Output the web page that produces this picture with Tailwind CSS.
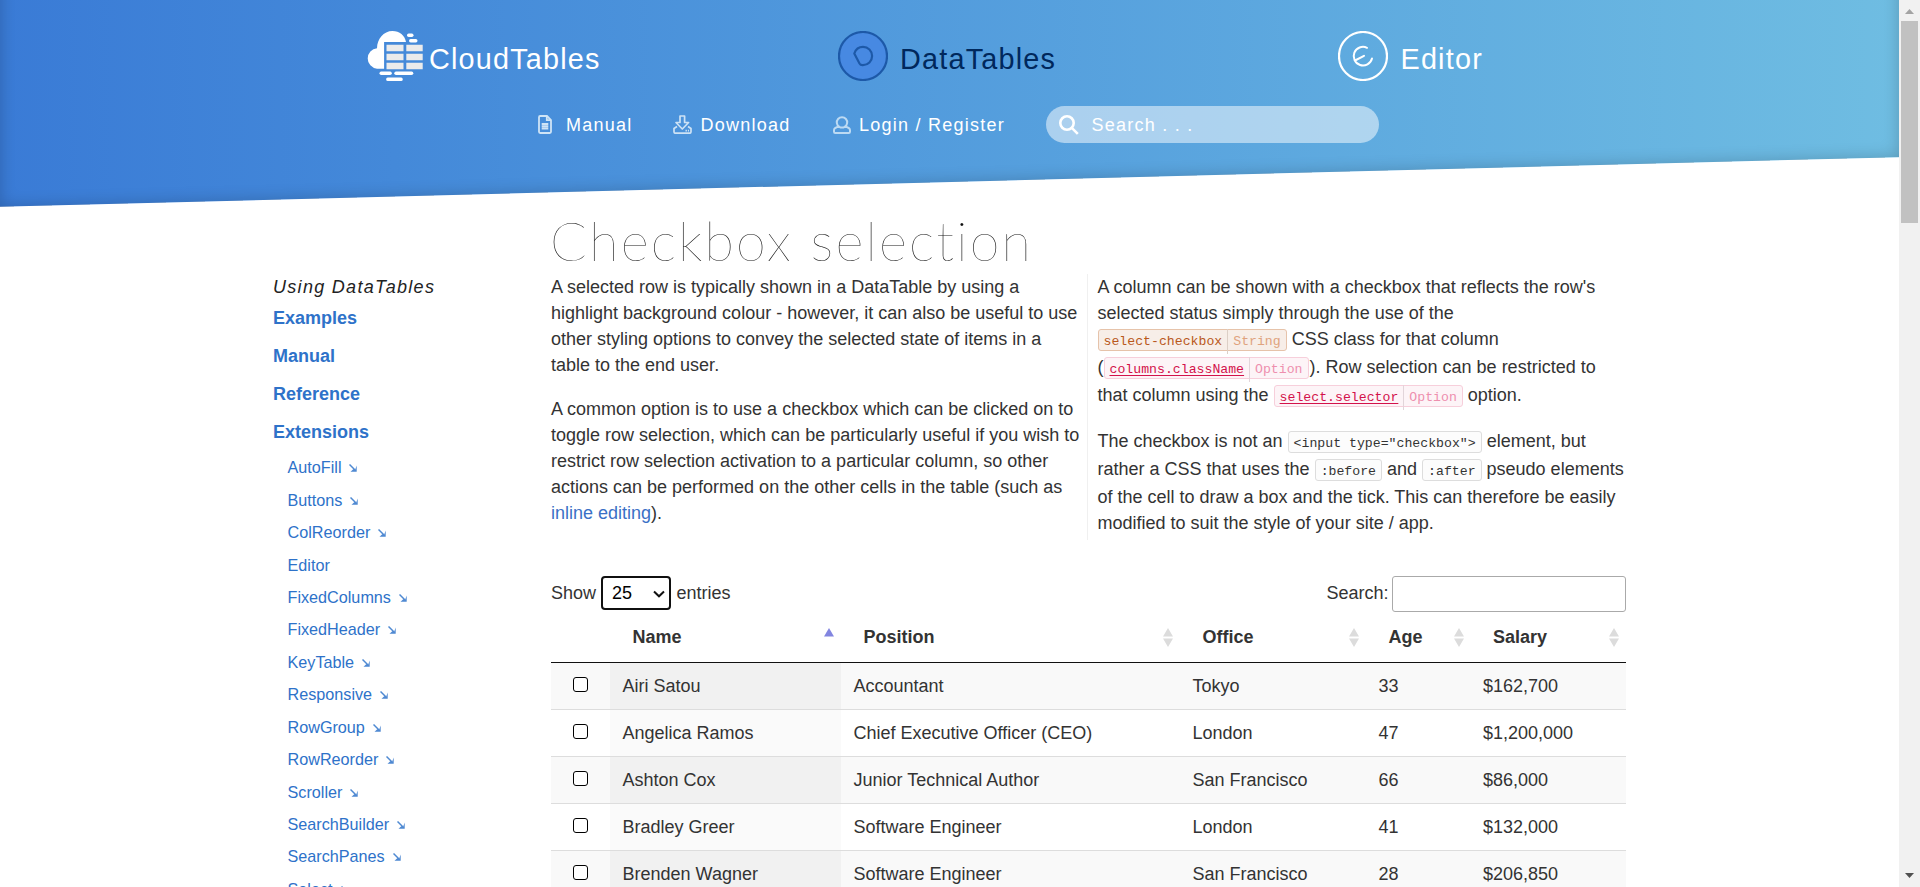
<!DOCTYPE html>
<html lang="en">
<head>
<meta charset="utf-8">
<title>DataTables example - Checkbox selection</title>
<script src="https://cdn.jsdelivr.net/npm/@tailwindcss/browser@4"></script>
</head>
<body class="bg-white">
<div class="flex h-[887px] w-[1920px] overflow-hidden font-['Liberation_Sans',Arial,sans-serif] text-[18px] leading-[26px] text-[#333]">
  <div class="relative h-full w-[1899px] overflow-hidden">
    <div class="absolute top-[-220px] left-0 h-[402px] w-full -skew-y-[1.5deg] bg-linear-to-r from-[#3a7bd6] to-[#6fbde2] shadow-[inset_0_0_16px_rgba(0,0,0,0.2)]"></div>

    <header class="relative h-[206px] pt-[31px] text-white">
      <div class="flex h-[50px] items-start text-[28.8px] leading-[32px] tracking-[1.200px] whitespace-nowrap">
        <a class="ml-[366px] flex w-[472px]">
          <svg class="h-[50px] w-[57px] shrink-0" viewBox="-0.500 0 57 50">
            <path fill="#fff" d="M17.600 11v26.700H10.500A10.300 10.300 0 0 1 10.500 17.200C10.500 8 17 0 26 0c7 0 12.500 4.500 13.500 11z"/>
            <g fill="#fff"><rect x="40.500" y="2.500" width="6.500" height="3.500" rx="1.700"/><rect x="42.500" y="8" width="8.500" height="3.500" rx="1.700"/><rect x="13" y="40.500" width="12.300" height="3.500" rx="1.700"/><rect x="27.800" y="40.500" width="19" height="3.500" rx="1.700"/><rect x="19.700" y="46.500" width="16.500" height="3.500" rx="1.500"/></g>
            <g fill="#ebebeb"><path d="M20 13.800h17v6.500H20zM39.800 13.800h16.400v6.500H39.800zM20 22.800h17v6.500H20zM39.800 22.800h16.400v6.500H39.800zM20 31.800h17v6.500H20zM39.800 31.800h16.400v6.500H39.800z"/></g>
          </svg>
          <span class="ml-[6px] pt-[12px]">CloudTables</span>
        </a>
        <a class="flex w-[500px] text-[#00285c]">
          <svg class="h-[50px] w-[50px] shrink-0" viewBox="0 0 50 50" fill="none" stroke="#1d59a8"><circle cx="25" cy="25" r="24" fill="#4789e2" stroke-width="2.200"/><path d="M16.300 22.500C18 17.500 21.500 15.900 25 15.900A9.100 9.100 0 0 1 25 34.100Q22.500 34.300 21.500 32.500z" stroke-width="2.200" stroke-linejoin="round"/></svg>
          <span class="ml-[12px] pt-[12px]">DataTables</span>
        </a>
        <a class="flex">
          <svg class="h-[50px] w-[50px] shrink-0" viewBox="0 0 50 50" fill="none" stroke="#fff" stroke-width="2.200"><circle cx="25" cy="25" r="24"/><path d="M29 16.800A9.300 9.300 0 1 0 34 27.500M17 29.500L26 24.800" stroke-linecap="round" stroke-width="2"/></svg>
          <span class="ml-[12.500px] pt-[12px]">Editor</span>
        </a>
      </div>
      <nav class="mt-[25px] flex h-[37px] items-center pl-[538px] tracking-[1.250px] whitespace-nowrap">
        <a class="flex w-[135px] items-center">
          <svg class="h-[19px] w-[14px] shrink-0" viewBox="0 0 14 19" fill="none" stroke="#cfe4f6" stroke-width="1.800"><path d="M1 2.200Q1 1 2.200 1H9l4 4v11.800q0 1.200-1.200 1.200H2.200Q1 18 1 16.800z"/><path d="M8.800 1v4.200H13"/><path d="M3.700 9h6.600M3.700 11.300h6.600M3.700 13.600h6.600" stroke-width="2"/></svg>
          <span class="ml-[14px]">Manual</span>
        </a>
        <a class="flex w-[160px] items-center">
          <svg class="h-[19px] w-[19px] shrink-0" viewBox="0 0 19 19" fill="none" stroke="#cde2f5" stroke-width="1.700" stroke-linejoin="round"><path d="M7 1h4.600v6.500h4L9.300 14 3 7.500h4z"/><path d="M4 11.500L1 13.500v3.300Q1 18.200 2.300 18.200h14.400q1.300 0 1.300-1.400v-3.300l-3-2"/><path d="M12.500 15.700h3.500" stroke-dasharray="1.400 1"/></svg>
          <span class="ml-[8.500px]">Download</span>
        </a>
        <a class="flex w-[213px] items-center">
          <svg class="mt-px h-[18px] w-[18px] shrink-0" viewBox="0 0 18 18" fill="none" stroke="#bcdaf3" stroke-width="2"><path d="M6.200 10.800a5.200 5.200 0 1 1 5.600 0"/><path d="M6.200 10.800Q1 11.500 1 14.200v1.600Q1 17 2.200 17h13.600q1.200 0 1.200-1.200v-1.600q0-2.700-5.200-3.400Q9 12.300 6.200 10.800z"/></svg>
          <span class="ml-[8px]">Login / Register</span>
        </a>
        <div class="flex h-[37px] w-[333px] items-center rounded-full bg-white/50 pl-[13px]">
          <svg class="h-[20px] w-[20px] shrink-0" viewBox="0 0 20 20" fill="none" stroke="#fff" stroke-width="2.600"><circle cx="8" cy="8" r="6.700"/><path d="M12.800 12.800L18.800 18.800"/></svg>
          <span class="ml-[12.500px]">Search . . .</span>
        </div>
      </nav>
    </header>

    <main class="relative flex pl-[273px]">
      <aside class="w-[278px] shrink-0 pt-[68px] text-[#2e72c9]">
        <h2 class="text-[#222] italic tracking-[1.300px]">Using DataTables</h2>
        <ul class="font-bold">
          <li class="h-[38px] pt-[5px]">Examples</li>
          <li class="h-[38px] pt-[5px]">Manual</li>
          <li class="h-[38px] pt-[5px]">Reference</li>
          <li class="h-[38px] pt-[5px]">Extensions</li>
        </ul>
        <ul id="extensions" class="-mt-px pl-[14.500px] text-[16.200px]"></ul>
      </aside>

      <section class="w-[1075px] shrink-0 whitespace-nowrap">
        <h1 class="-ml-px h-[68px] font-['Lato',sans-serif] text-[54px] leading-[70px] font-thin tracking-[2.200px] text-[#111]">Checkbox selection</h1>
        <div class="flex h-[266px]">
          <div class="w-[537px] border-r border-[#f0f0f0]">
            <p class="mb-[18px]">A selected row is typically shown in a DataTable by using a<br>highlight background colour - however, it can also be useful to use<br>other styling options to convey the selected state of items in a<br>table to the end user.</p>
            <p>A common option is to use a checkbox which can be clicked on to<br>toggle row selection, which can be particularly useful if you wish to<br>restrict row selection activation to a particular column, so other<br>actions can be performed on the other cells in the table (such as<br><a class="text-[#3a70c6]">inline editing</a>).</p>
          </div>
          <div class="pl-[9.500px]">
            <p class="mb-[18px]">A column can be shown with a checkbox that reflects the row's<br>selected status simply through the use of the<br><code class="mb-[3px] inline-block rounded-[3px] border border-[#e6c3aa] bg-[#f7eee8] px-[5px] pt-[4px] font-['Liberation_Mono',monospace] text-[13.200px] leading-[16px] text-[#b9581b]">select-checkbox<span class="ml-[5px] border-l border-[#dccfc6] py-[5px] pl-[5px] text-[#dfa37e]">String</span></code> CSS class for that column<br>(<code class="mb-[3px] inline-block rounded-[3px] border border-[#f7cfdb] bg-[#fdf4f7] px-[5px] pt-[4px] font-['Liberation_Mono',monospace] text-[13.200px] leading-[16px] text-[#d3124b]"><u class="underline-offset-2">columns.className</u><span class="ml-[5px] border-l border-[#e2d5da] py-[5px] pl-[5px] text-[#ee8fae]">Option</span></code><span class="ml-px">).</span> Row selection can be restricted to<br>that column using the <code class="mb-[3px] inline-block rounded-[3px] border border-[#f7cfdb] bg-[#fdf4f7] px-[5px] pt-[4px] font-['Liberation_Mono',monospace] text-[13.200px] leading-[16px] text-[#d3124b]"><u class="underline-offset-2">select.selector</u><span class="ml-[5px] border-l border-[#e2d5da] py-[5px] pl-[5px] text-[#ee8fae]">Option</span></code> option.</p>
            <p>The checkbox is not an <code class="mb-[3px] inline-block rounded-[3px] border border-[#ddd] bg-[#fcfcfc] px-[5px] pt-[4px] font-['Liberation_Mono',monospace] text-[13.200px] leading-[16px]">&lt;input type="checkbox"&gt;</code> element, but<br>rather a CSS that uses the <code class="mb-[3px] inline-block rounded-[3px] border border-[#ddd] bg-[#fcfcfc] px-[5px] pt-[4px] font-['Liberation_Mono',monospace] text-[13.200px] leading-[16px]">:before</code> and <code class="mb-[3px] inline-block rounded-[3px] border border-[#ddd] bg-[#fcfcfc] px-[5px] pt-[4px] font-['Liberation_Mono',monospace] text-[13.200px] leading-[16px]">:after</code> pseudo elements<br>of the cell to draw a box and the tick. This can therefore be easily<br>modified to suit the style of your site / app.</p>
          </div>
        </div>

        <div class="mt-[36px] flex h-[36px] justify-between">
          <div class="flex items-start">
            <span class="w-[50px] pt-[4px]">Show</span>
            <div class="flex h-[34px] w-[70px] items-center justify-between rounded-[4px] border-2 border-[#101010] pr-[4px] pl-[9px] text-black">
              <span>25</span>
              <svg class="mt-px h-[8px] w-[12px]" viewBox="0 0 12 8" fill="none" stroke="#111" stroke-width="2"><path d="M1 1.500L6 6.300L11 1.500"/></svg>
            </div>
            <span class="ml-[5.500px] pt-[4px]">entries</span>
          </div>
          <div class="flex items-start">
            <span class="pt-[4px]">Search:</span>
            <div class="ml-[3.500px] h-[36px] w-[234px] rounded-[3px] border border-[#aaa]"></div>
          </div>
        </div>

        <div id="head" class="grid h-[51px] grid-cols-[59px_231px_339px_186px_104.500px_155.500px] border-b border-[#111] font-bold"></div>
        <div id="rows"></div>
      </section>
    </main>
  </div>

  <div class="flex h-full w-[21px] flex-col items-center bg-[#f1f1f1]">
    <svg class="h-[21px] w-[21px] shrink-0" viewBox="0 0 21 21" fill="#a3a3a3"><path d="M6 14h9L10.500 9z"/></svg>
    <div class="h-[202px] w-[17px] bg-[#c1c1c1]"></div>
    <svg class="mt-auto h-[21px] w-[21px] shrink-0" viewBox="0 0 21 21" fill="#505050"><path d="M6 7h9L10.500 12z"/></svg>
  </div>
</div>

<script>
const extensions = ['AutoFill','Buttons','ColReorder','Editor','FixedColumns','FixedHeader','KeyTable','Responsive','RowGroup','RowReorder','Scroller','SearchBuilder','SearchPanes','Select'];
document.getElementById('extensions').innerHTML = extensions.map(n =>
  `<li class="flex h-[32.450px] items-center"><span>${n}</span>${n === 'Editor' ? '' :
  '<svg class="mt-[2px] ml-[8px] h-[8px] w-[8px]" viewBox="0 0 8 8"><path d="M0.500 0.500L6 6" stroke="#4f89d2" stroke-width="1.500"/><path d="M7.700 1.500v6.200H1.500L4.500 5L6 6z" fill="#4f89d2"/></svg>'}</li>`).join('');

const sortBoth = '<svg class="mt-[16px] mr-[7px] h-[19px] w-[10px]" viewBox="0 0 10 19" fill="#dcdcdc"><path d="M0 8.500h10L5 0zM0 10.500h10L5 19z"/></svg>';
const sortAsc = '<svg class="mt-[16px] mr-[7px] h-[9px] w-[10px]" viewBox="0 0 10 9" fill="#8285e0"><path d="M0 8.500h10L5 0z"/></svg>';
document.getElementById('head').innerHTML = '<div></div>' + ['Name','Position','Office','Age','Salary'].map((n, i) =>
  `<div class="flex items-start justify-between pl-[22.500px]"><span class="pt-[12px]">${n}</span>${i ? sortBoth : sortAsc}</div>`).join('');

const people = [
  ['Airi Satou','Accountant','Tokyo','33','$162,700'],
  ['Angelica Ramos','Chief Executive Officer (CEO)','London','47','$1,200,000'],
  ['Ashton Cox','Junior Technical Author','San Francisco','66','$86,000'],
  ['Bradley Greer','Software Engineer','London','41','$132,000'],
  ['Brenden Wagner','Software Engineer','San Francisco','28','$206,850']];
document.getElementById('rows').innerHTML = people.map((r, i) =>
  `<div class="grid grid-cols-[59px_231px_339px_186px_104.500px_155.500px] ${i ? 'border-t border-[#ddd]' : ''} ${i % 2 ? 'bg-white' : 'bg-[#f9f9f9]'}">
    <div class="flex h-[46px] pt-[14px] pl-[22px]"><span class="h-[15px] w-[15px] rounded-[3px] border border-black bg-white"></span></div>` +
  r.map((c, j) => `<div class="h-[46px] py-[10px] pl-[12.500px] ${j ? '' : i % 2 ? 'bg-[#fafafa]' : 'bg-[#f1f1f1]'}">${c}</div>`).join('') + '</div>').join('');
</script>
</body>
</html>
